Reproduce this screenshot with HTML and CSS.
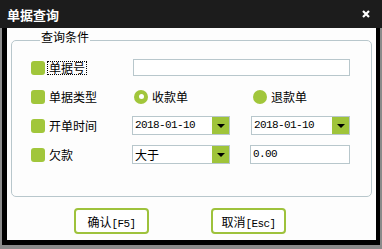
FILE: index.html
```html
<!DOCTYPE html>
<html lang="zh-CN">
<head>
    <meta charset="UTF-8">
    <meta name="viewport" content="width=device-width, initial-scale=1.0">
    <title>单据查询</title>
    <link rel="stylesheet" href="styles.css">
</head>
<body>

    <div class="dialog">
        <div class="dialog-title">
            <span>单据查询</span>
            <svg class="close" width="8" height="8" viewBox="0 0 8 8">
                <path d="M1 1 L7 7 M7 1 L1 7" stroke="#fff" stroke-width="2.2" />
            </svg>
        </div>

        <div class="dialog-frame">
            <fieldset class="query">
                <legend>查询条件</legend>
                <div class="form">
                    <div class="field">
                        <span class="check"></span>
                        <span class="label focused">单据号</span>
                    </div>
                    <div class="input wide"></div>

                    <div class="field">
                        <span class="check"></span>
                        <span class="label">单据类型</span>
                    </div>
                    <div class="radio first"><span class="dot checked"></span>收款单</div>
                    <div class="radio second"><span class="dot"></span>退款单</div>

                    <div class="field">
                        <span class="check"></span>
                        <span class="label">开单时间</span>
                    </div>
                    <div class="select">
                        <span class="select-value mono">2018-01-10</span>
                        <span class="select-btn"><i></i></span>
                    </div>
                    <div class="select right">
                        <span class="select-value mono">2018-01-10</span>
                        <span class="select-btn"><i></i></span>
                    </div>

                    <div class="field">
                        <span class="check"></span>
                        <span class="label">欠款</span>
                    </div>
                    <div class="select">
                        <span class="select-value">大于</span>
                        <span class="select-btn"><i></i></span>
                    </div>
                    <div class="input amount mono">0.00</div>
                </div>
            </fieldset>

            <div class="actions">
                <button class="btn">确认<span class="mono">[F5]</span></button>
                <button class="btn">取消<span class="mono">[Esc]</span></button>
            </div>
        </div>
    </div>

</body>
</html>
```

FILE: styles.css
```css
* {
    margin: 0;
    padding: 0;
    box-sizing: border-box;
    font-family: "Noto Sans CJK SC", sans-serif;
}

body {
    width: 382px;
    height: 249px;
    background-color: #8a8a8a;
    overflow: hidden;
}

.mono {
    font-family: "Liberation Mono", monospace;
    font-size: 11px;
    letter-spacing: -0.6px;
}

.dialog {
    width: 382px;
}

.dialog-title {
    height: 28px;
    background: #1c1c1c;
    color: #fff;
    display: flex;
    align-items: center;
    justify-content: space-between;
    padding: 0 12px 0 7px;
    font-size: 13px;
    font-weight: bold;
}

.dialog-frame {
    margin: 0 2px;
    height: 217px;
    background: #fdfdfd;
    border-left: 5px solid #000;
    border-right: 4px solid #000;
    border-bottom: 5px solid #000;
    padding-top: 1px;
}

/* Query group */
.query {
    margin: 0 4px;
    border: 1px solid #b8c7cc;
    border-radius: 5px;
    padding: 2px 0 27px 19px;
}

.query legend {
    margin-left: 9px;
    padding: 0 1px 6px;
    font-size: 12px;
    line-height: 16px;
    color: #000;
}

.form {
    display: grid;
    grid-template-columns: 81px 98px 100px;
    column-gap: 20px;
    grid-auto-rows: 29px;
    align-items: center;
    font-size: 12px;
    color: #000;
}

.field {
    display: flex;
    align-items: center;
}

.check {
    width: 14px;
    height: 14px;
    border-radius: 3px;
    background: #a1c63b;
    margin-right: 2px;
}

.label {
    border: 1px solid transparent;
    padding: 0 1px;
    line-height: 12px;
}

.label.focused {
    border: 1px dotted #000;
}

.input {
    height: 17px;
    border: 1px solid #b8c7cc;
    background: #fff;
    padding-left: 2px;
    line-height: 15px;
}

.input.wide {
    grid-column: 2 / 4;
    margin-left: 1px;
}

.input.amount {
    height: 19px;
    line-height: 17px;
}

.radio {
    display: flex;
    align-items: center;
    gap: 4px;
}

.radio.first {
    margin-left: 2px;
}

.radio.second {
    margin-left: 3px;
}

.dot {
    width: 14px;
    height: 14px;
    border-radius: 50%;
    background: #a1c63b;
    display: flex;
    align-items: center;
    justify-content: center;
}

.dot.checked::after {
    content: "";
    width: 5px;
    height: 5px;
    border-radius: 50%;
    background: #fff;
}

.select {
    height: 19px;
    border: 1px solid #b8c7cc;
    background: #fff;
    display: flex;
}

.select.right {
    margin-left: 1px;
}

.select-value {
    flex: 1;
    padding-left: 2px;
    line-height: 17px;
}

.select-btn {
    width: 17px;
    background: #9fc43a;
    display: flex;
    align-items: center;
    justify-content: center;
}

.select-btn i {
    border-left: 4px solid transparent;
    border-right: 4px solid transparent;
    border-top: 4px solid #000;
}

/* Buttons */
.actions {
    display: flex;
    gap: 62px;
    padding: 11px 0 0 67px;
}

.btn {
    width: 75px;
    height: 26px;
    border: 2px solid #9ec23c;
    border-radius: 4px;
    background: #fff;
    font-size: 12px;
    color: #000;
}
```
